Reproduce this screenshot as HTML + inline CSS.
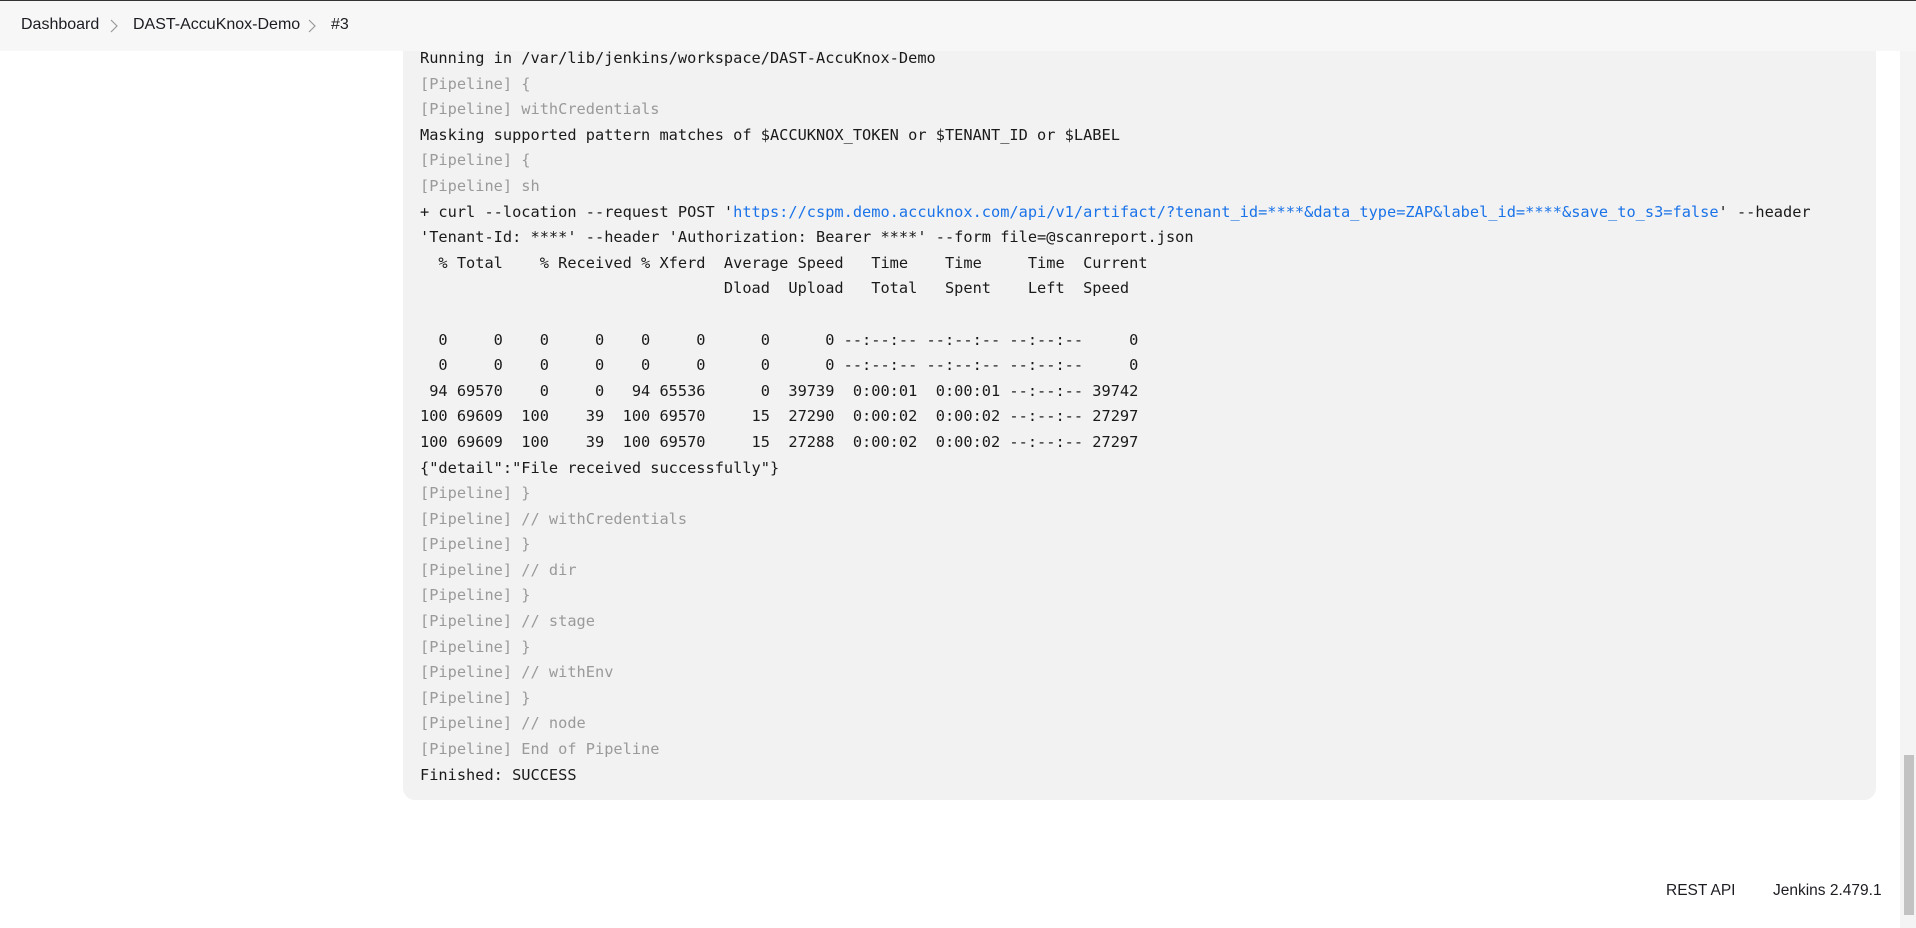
<!DOCTYPE html>
<html><head><meta charset="utf-8"><style>
html,body{margin:0;padding:0;}
body{width:1916px;height:928px;background:#fff;position:relative;overflow:hidden;font-family:"Liberation Sans",sans-serif;}
#topline{position:absolute;left:0;top:0;width:1916px;height:1px;background:#333;z-index:5;}
#hdr{position:absolute;left:0;top:1px;width:1916px;height:50px;background:rgba(247,247,248,0.97);z-index:2;}
.bc{position:absolute;top:15px;font-size:16px;color:#1c1c22;}
.chev{position:absolute;top:18px;}
#box{position:absolute;left:403px;top:-40px;width:1473px;height:840px;background:#f2f2f2;border-radius:12px;}
pre{position:absolute;left:420px;top:46px;margin:0;font-family:"DejaVu Sans Mono","Liberation Mono",monospace;font-size:15.3px;line-height:25.6px;color:#1a1a1a;}
.g{color:#9a9a9a;}
a{color:#1a73e8;text-decoration:none;}
.ft{position:absolute;top:882px;font-size:15.5px;color:#1c1c22;}
#sb{position:absolute;left:1900px;top:0;width:16px;height:928px;background:#f4f4f4;}
#th{position:absolute;left:1904px;top:755px;width:10px;height:160px;background:#c2c2c2;}
</style></head><body>
<div id="topline"></div>
<div id="box"></div>
<pre>Running in /var/lib/jenkins/workspace/DAST-AccuKnox-Demo
<span class="g">[Pipeline] {</span>
<span class="g">[Pipeline] withCredentials</span>
Masking supported pattern matches of $ACCUKNOX_TOKEN or $TENANT_ID or $LABEL
<span class="g">[Pipeline] {</span>
<span class="g">[Pipeline] sh</span>
+ curl --location --request POST '<a>https://cspm.demo.accuknox.com/api/v1/artifact/?tenant_id=****&amp;data_type=ZAP&amp;label_id=****&amp;save_to_s3=false</a>' --header
'Tenant-Id: ****' --header 'Authorization: Bearer ****' --form file=@scanreport.json
  % Total    % Received % Xferd  Average Speed   Time    Time     Time  Current
                                 Dload  Upload   Total   Spent    Left  Speed

  0     0    0     0    0     0      0      0 --:--:-- --:--:-- --:--:--     0
  0     0    0     0    0     0      0      0 --:--:-- --:--:-- --:--:--     0
 94 69570    0     0   94 65536      0  39739  0:00:01  0:00:01 --:--:-- 39742
100 69609  100    39  100 69570     15  27290  0:00:02  0:00:02 --:--:-- 27297
100 69609  100    39  100 69570     15  27288  0:00:02  0:00:02 --:--:-- 27297
{"detail":"File received successfully"}
<span class="g">[Pipeline] }</span>
<span class="g">[Pipeline] // withCredentials</span>
<span class="g">[Pipeline] }</span>
<span class="g">[Pipeline] // dir</span>
<span class="g">[Pipeline] }</span>
<span class="g">[Pipeline] // stage</span>
<span class="g">[Pipeline] }</span>
<span class="g">[Pipeline] // withEnv</span>
<span class="g">[Pipeline] }</span>
<span class="g">[Pipeline] // node</span>
<span class="g">[Pipeline] End of Pipeline</span>
Finished: SUCCESS</pre>
<div id="hdr">
<span class="bc" style="left:21px">Dashboard</span>
<svg class="chev" style="left:110px" width="8" height="14" viewBox="0 0 8 14"><path d="M1 1l6 6-6 6" fill="none" stroke="#999" stroke-width="1.2"/></svg>
<span class="bc" style="left:133px">DAST-AccuKnox-Demo</span>
<svg class="chev" style="left:308px" width="8" height="14" viewBox="0 0 8 14"><path d="M1 1l6 6-6 6" fill="none" stroke="#999" stroke-width="1.2"/></svg>
<span class="bc" style="left:331px">#3</span>
</div>
<span class="ft" style="left:1666px">REST API</span>
<span class="ft" style="left:1773px">Jenkins 2.479.1</span>
<div id="sb"></div><div id="th"></div>
</body></html>
